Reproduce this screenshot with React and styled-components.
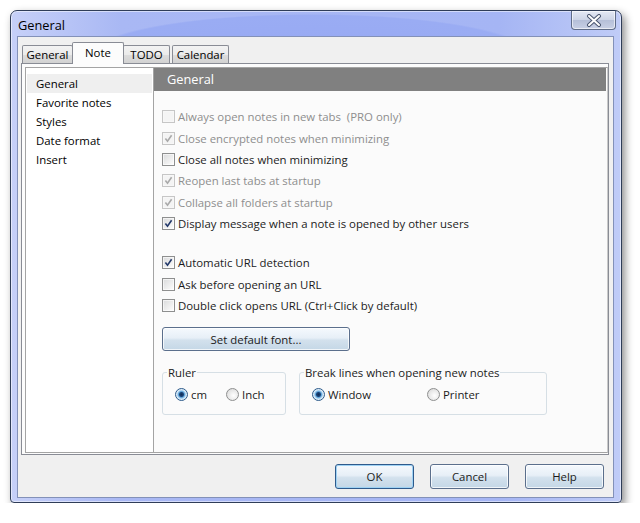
import styled, { createGlobalStyle } from 'styled-components';

const GlobalStyle = createGlobalStyle`
  body {
    margin: 0;
    background: #ffffff;
    font-family: "Open Sans", "Noto Sans", sans-serif;
    font-size: 11.4px;
    color: #1b1b1b;
  }
`;

const sections = ['General', 'Favorite notes', 'Styles', 'Date format', 'Insert'];

const noteOptions = [
  { label: 'Always open notes in new tabs  (PRO only)', disabled: true },
  { label: 'Close encrypted notes when minimizing', disabled: true, checked: true },
  { label: 'Close all notes when minimizing' },
  { label: 'Reopen last tabs at startup', disabled: true, checked: true },
  { label: 'Collapse all folders at startup', disabled: true, checked: true },
  { label: 'Display message when a note is opened by other users', checked: true },
];

const urlOptions = [
  { label: 'Automatic URL detection', checked: true },
  { label: 'Ask before opening an URL' },
  { label: 'Double click opens URL (Ctrl+Click by default)' },
];

const CheckBox = ({ checked, disabled }) => (
  <Box $disabled={disabled}>
    {checked && (
      <svg width='9' height='9' viewBox='0 0 9 9'>
        <path
          d='M1.4 4.6 L3.5 7.2 L7.6 1.3'
          fill='none'
          stroke={disabled ? '#a9a9a9' : '#23396a'}
          strokeWidth='1.6'
        />
      </svg>
    )}
  </Box>
);

const App = () => {
  return (
    <Page>
      <GlobalStyle />
      <Window>
        <TitleBar>
          <Title>General</Title>
          <CloseButton>
            <svg width='16' height='13' viewBox='0 0 16 13'>
              <path d='M3 2 L13 11 M13 2 L3 11' stroke='#4a5670' strokeWidth='4' strokeLinecap='round' />
              <path d='M3 2 L13 11 M13 2 L3 11' stroke='#ffffff' strokeWidth='2' strokeLinecap='round' />
            </svg>
          </CloseButton>
        </TitleBar>
        <Client>
          <TabRow>
            <Tab $w={51}>General</Tab>
            <Tab $w={52} $active>Note</Tab>
            <Tab $w={47}>TODO</Tab>
            <Tab $w={57} $gap>Calendar</Tab>
          </TabRow>
          <TabPanel>
            <Split>
              <SectionList>
                {sections.map((s, i) => (
                  <SectionItem key={s} $active={i === 0}>{s}</SectionItem>
                ))}
              </SectionList>
              <Content>
                <Header>General</Header>
                <Options>
                  <OptionGroup>
                    {noteOptions.map(o => (
                      <CheckRow key={o.label} $disabled={o.disabled}>
                        <CheckBox checked={o.checked} disabled={o.disabled} />
                        <span>{o.label}</span>
                      </CheckRow>
                    ))}
                  </OptionGroup>
                  <OptionGroup $spaced>
                    {urlOptions.map(o => (
                      <CheckRow key={o.label}>
                        <CheckBox checked={o.checked} />
                        <span>{o.label}</span>
                      </CheckRow>
                    ))}
                  </OptionGroup>
                  <Button $w={188} $h={24} $top={11}>Set default font...</Button>
                  <GroupRow>
                    <GroupBox $w={124}>
                      <legend>Ruler</legend>
                      <RadioOption $w={51}><Radio $checked />cm</RadioOption>
                      <RadioOption><Radio />Inch</RadioOption>
                    </GroupBox>
                    <GroupBox $w={248}>
                      <legend>Break lines when opening new notes</legend>
                      <RadioOption $w={115}><Radio $checked />Window</RadioOption>
                      <RadioOption><Radio />Printer</RadioOption>
                    </GroupBox>
                  </GroupRow>
                </Options>
              </Content>
            </Split>
          </TabPanel>
          <ButtonRow>
            <Button $w={79} $h={25} $default>OK</Button>
            <Button $w={79} $h={25}>Cancel</Button>
            <Button $w={79} $h={25}>Help</Button>
          </ButtonRow>
        </Client>
      </Window>
    </Page>
  );
};

export default App;

const Page = styled.div`
  padding: 10px 0 0 10px;
`;

const Window = styled.div`
  box-sizing: border-box;
  width: 612px;
  height: 493px;
  display: flex;
  flex-direction: column;
  padding: 0 7px 4px 6px;
  border: 1px solid #2f3d58;
  border-radius: 7px 7px 4px 4px;
  background:
    radial-gradient(220px 40px at 300px 43px, #97a9f3 0, #9aacf3 97%, rgba(154, 172, 243, 0) 100%),
    linear-gradient(to right, #c6d0f8, #a9b8f4 18%, #a5b5f4 80%, #c0ccf7);
  box-shadow: 3px 4px 9px rgba(0, 0, 0, 0.45), inset 0 0 0 1px rgba(255, 255, 255, 0.5);
`;

const TitleBar = styled.div`
  height: 25px;
  display: flex;
  justify-content: space-between;
  padding-left: 1px;
`;

const Title = styled.div`
  align-self: center;
  margin-top: 2px;
  font-size: 12.8px;
  color: #000;
`;

const CloseButton = styled.div`
  box-sizing: border-box;
  width: 45px;
  height: 19px;
  margin-right: -2px;
  display: flex;
  align-items: center;
  justify-content: center;
  border: 1px solid #5f6c88;
  border-top: none;
  border-radius: 0 0 4px 4px;
  background: linear-gradient(#e4e9f5, #cdd4e6 50%, #b5bfd8 51%, #c8d0e5);
  box-shadow: inset 0 0 0 1px rgba(255, 255, 255, 0.6);
`;

const Client = styled.div`
  flex: 1;
  display: flex;
  flex-direction: column;
  padding: 5px 4px 0 3px;
  background: #f0f0f0;
  border: 1px solid #8391b8;
`;

const TabRow = styled.div`
  position: relative;
  z-index: 1;
  height: 22px;
  margin-bottom: -1px;
  padding-left: 1px;
  display: flex;
  align-items: flex-end;
`;

const Tab = styled.div`
  box-sizing: border-box;
  width: ${p => p.$w}px;
  height: ${p => (p.$active ? 22 : 18)}px;
  margin: 0 ${p => (p.$active ? -1 : 0)}px ${p => (p.$active ? 0 : 1)}px;
  margin-left: ${p => (p.$gap ? 2 : p.$active ? -1 : 0)}px;
  border: 1px solid #898c95;
  border-bottom: none;
  border-radius: 2px 2px 0 0;
  display: flex;
  justify-content: center;
  align-items: ${p => (p.$active ? 'flex-start' : 'center')};
  padding-top: ${p => (p.$active ? 2 : 0)}px;
  background: ${p =>
    p.$active ? '#fcfcfc' : 'linear-gradient(#f3f3f3, #ebebeb 50%, #dddddd 51%, #d2d2d2)'};
  color: #000;
  font-size: 11.4px;
`;

const TabPanel = styled.div`
  box-sizing: border-box;
  height: 392px;
  display: flex;
  padding: 3px 0 1px 3px;
  border: 1px solid #898c95;
  background: #fcfcfc;
`;

const Split = styled.div`
  flex: 1;
  display: flex;
  border: 1px solid #a4a4a4;
  border-right-color: #c9c9c9;
`;

const SectionList = styled.div`
  width: 127px;
  padding-top: 6px;
  background: #ffffff;
  border-right: 1px solid #a4a4a4;
`;

const SectionItem = styled.div`
  height: 19px;
  line-height: 19px;
  margin: 0 1px;
  padding-left: 9px;
  color: #000;
  background: ${p => (p.$active ? '#efefef' : 'transparent')};
`;

const Content = styled.div`
  flex: 1;
  display: flex;
  flex-direction: column;
  background: #fbfbfb;
`;

const Header = styled.div`
  height: 23px;
  line-height: 23px;
  margin-right: 1px;
  padding-left: 13px;
  background: #808080;
  color: #ffffff;
  font-size: 12.8px;
`;

const Options = styled.div`
  display: flex;
  flex-direction: column;
  align-items: flex-start;
  padding: 15px 0 0 8px;
`;

const OptionGroup = styled.div`
  margin-top: ${p => (p.$spaced ? 17.6 : 0)}px;
`;

const CheckRow = styled.div`
  height: 21.4px;
  display: flex;
  align-items: center;
  gap: 3px;
  white-space: pre;
  color: ${p => (p.$disabled ? '#8e8e8e' : '#1b1b1b')};
`;

const Box = styled.span`
  box-sizing: border-box;
  width: 13px;
  height: 13px;
  display: flex;
  align-items: center;
  justify-content: center;
  border: 1px solid ${p => (p.$disabled ? '#c6c6c6' : '#8e8f8f')};
  background: ${p =>
    p.$disabled ? '#f4f4f4' : 'linear-gradient(135deg, #d9dadb, #f3f3f3 70%, #ffffff)'};
  box-shadow: inset 0 0 0 1px ${p => (p.$disabled ? '#f7f7f7' : 'rgba(255, 255, 255, 0.6)')};
`;

const Button = styled.div`
  box-sizing: border-box;
  width: ${p => p.$w}px;
  height: ${p => p.$h}px;
  margin-top: ${p => p.$top || 0}px;
  display: flex;
  align-items: center;
  justify-content: center;
  border: 1px solid ${p => (p.$default ? '#2e5a8c' : '#5b6f8c')};
  border-radius: 3px;
  background: linear-gradient(#f5f9fd, #e7eff7 45%, #d3e1ed 55%, #c4d7e6);
  box-shadow: inset 0 0 0 1px ${p => (p.$default ? '#9fd2f3' : 'rgba(255, 255, 255, 0.75)')};
  color: #1b1b1b;
`;

const GroupRow = styled.div`
  display: flex;
  gap: 13px;
  margin-top: 14px;
`;

const GroupBox = styled.fieldset`
  box-sizing: border-box;
  width: ${p => p.$w}px;
  height: 50px;
  margin: 0;
  padding: 6px 12px 0;
  display: flex;
  align-items: flex-start;
  border: 1px solid #d6dfe5;
  border-radius: 3px;

  legend {
    padding: 0 1px;
    margin-left: -8px;
    color: #1b1b1b;
  }
`;

const RadioOption = styled.div`
  width: ${p => (p.$w ? `${p.$w}px` : 'auto')};
  height: 16px;
  display: flex;
  align-items: center;
  gap: 3px;
  color: #1b1b1b;
`;

const Radio = styled.span`
  box-sizing: border-box;
  width: 13px;
  height: 13px;
  border-radius: 50%;
  border: 1px solid ${p => (p.$checked ? '#2c5a8a' : '#8e8f8f')};
  background: ${p =>
    p.$checked
      ? 'radial-gradient(circle, #0f2c55 0, #1b4478 2px, #5fa5db 3px, #cfe6f7 4.5px, #eef6fc 6px)'
      : 'radial-gradient(circle at 60% 60%, #ffffff, #e6e6e6 60%, #d2d2d2)'};
`;

const ButtonRow = styled.div`
  display: flex;
  justify-content: flex-end;
  gap: 16px;
  margin-top: 9px;
  padding-right: 5px;
`;
